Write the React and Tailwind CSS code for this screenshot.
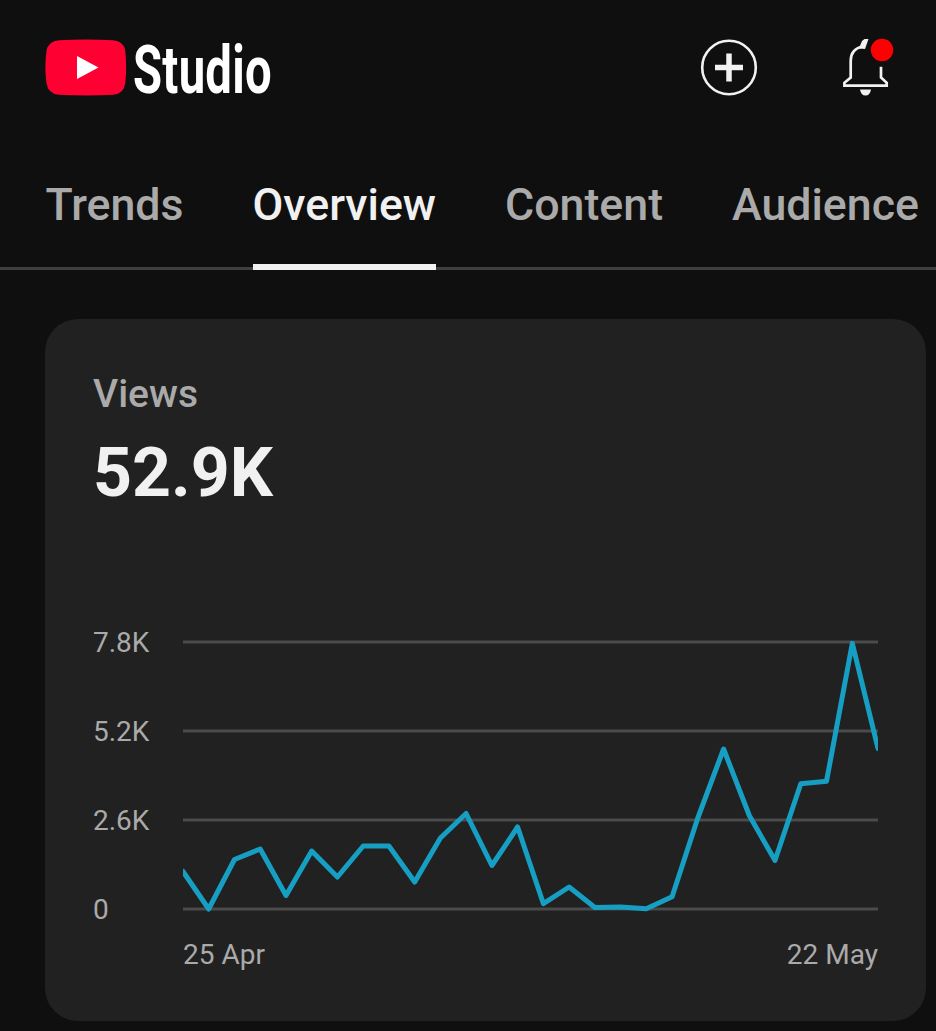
const tabs = [
  { name: 'Trends' },
  { name: 'Overview', active: true },
  { name: 'Content' },
  { name: 'Audience' },
];

// Daily views, 25 Apr - 22 May
const views = [
  1095, 0, 1446, 1753, 394, 1694, 935, 1840, 1840, 789, 2074, 2790, 1271, 2395,
  155, 643, 44, 58, 9, 360, 2658, 4674, 2731, 1417, 3660, 3730, 7760, 4690,
];

const MAX_VIEWS = 7800;
const CHART_WIDTH = 695;
const CHART_HEIGHT = 267;
const CHART_PAD = 10;

function Logo() {
  return (
    <div className="flex items-center">
      <svg width="82" height="58" viewBox="0 0 82 58">
        <path
          d="M14 2.200 Q41 0.800 68 2.200 Q79 3 80.300 13 Q82 29.500 80.300 45 Q79 56 68 56.800 Q41 58 14 56.800 Q3 56 1.500 45 Q-0.800 29.500 1.500 13 Q3 3 14 2.200 Z"
          fill="#ff0033"
        />
        <path d="M32 18 L53.500 29.500 L32 41 Z" fill="#fff" />
      </svg>
      <span className="mt-[6px] ml-[6px] w-[140px] origin-left scale-x-[0.705] text-[67px] leading-[58px] font-bold tracking-[0.4px] text-white">
        Studio
      </span>
    </div>
  );
}

function CreateIcon() {
  return (
    <svg width="58" height="58" viewBox="0 0 58 58" fill="none" stroke="#f1f1f1">
      <circle cx="29" cy="29.500" r="26.800" strokeWidth="2.600" />
      <path d="M15 29.500 H43 M29 15.500 V43.500" strokeWidth="5.500" />
    </svg>
  );
}

function BellIcon() {
  return (
    <svg className="-mt-[2px]" width="56" height="60" viewBox="0 0 56 60" fill="none">
      <path
        d="M22 10.800 C14 12.500 10.700 17.500 10.700 25 V41.500 L4.400 46.800 V49.600 H46.700 V46.800 L41 41.500 V30.700"
        stroke="#f1f1f1"
        strokeWidth="2.700"
      />
      <path d="M19.700 10.500 L22 5 L24.500 3 H28.500 L25 13 L20 12.500 Z" fill="#f1f1f1" />
      <path d="M20 53.500 H31 Q30 59.600 25.500 59.600 Q21 59.600 20 53.500 Z" fill="#f1f1f1" />
      <circle cx="42" cy="14" r="11.200" fill="#ff0000" />
    </svg>
  );
}

function ViewsChart() {
  const points = views
    .map((value, i) => {
      const x = (i * CHART_WIDTH) / (views.length - 1);
      const y = CHART_PAD + CHART_HEIGHT * (1 - value / MAX_VIEWS);
      return `${x.toFixed(1)},${y.toFixed(1)}`;
    })
    .join(' ');

  return (
    <div className="flex text-[28px] leading-8 text-[#aaa]">
      <div className="flex w-[90px] flex-col gap-[57px]">
        <span>7.8K</span>
        <span>5.2K</span>
        <span>2.6K</span>
        <span>0</span>
      </div>
      <div className="w-[695px]">
        <svg className="mt-[5px] block" width="695" height="287" viewBox="0 0 695 287" fill="none">
          {[10, 99, 188, 277].map((y) => (
            <path key={y} d={`M0 ${y}H695`} stroke="#4b4b4b" strokeWidth="3" />
          ))}
          <polyline
            points={points}
            stroke="#169fc2"
            strokeWidth="5"
            strokeLinejoin="round"
            strokeLinecap="round"
          />
        </svg>
        <div className="mt-[20px] flex justify-between">
          <span>25 Apr</span>
          <span>22 May</span>
        </div>
      </div>
    </div>
  );
}

export default function App() {
  return (
    <div className="h-[1031px] w-[936px] overflow-hidden bg-[#0f0f0f] font-['Roboto',sans-serif]">
      {/* Header */}
      <header className="flex h-[134px] items-center justify-between pr-10 pl-[45px]">
        <Logo />
        <div className="flex items-center gap-[82px]">
          <CreateIcon />
          <BellIcon />
        </div>
      </header>

      {/* Tabs */}
      <nav className="flex h-[136px] gap-[69px] border-b-[3px] border-[#3f3f3f] pl-[45.500px]">
        {tabs.map((tab) => (
          <div
            key={tab.name}
            className={`-mb-[3px] h-[136px] pt-[44px] text-[44.700px] leading-[54px] font-medium ${
              tab.active ? 'border-b-[6px] border-[#f1f1f1] text-[#f1f1f1]' : 'text-[#aaa]'
            }`}
          >
            {tab.name}
          </div>
        ))}
      </nav>

      {/* Views card */}
      <main className="mt-[49px] ml-[45px] h-[702px] w-[881px] rounded-[33px] bg-[#212121] pt-[52px] pl-12">
        <h2 className="text-[39px] leading-[46px] font-medium text-[#aaa]">Views</h2>
        <p className="mt-[16px] text-[68px] leading-[80px] font-bold text-[#f1f1f1]">52.9K</p>
        <div className="mt-[114px]">
          <ViewsChart />
        </div>
      </main>
    </div>
  );
}
